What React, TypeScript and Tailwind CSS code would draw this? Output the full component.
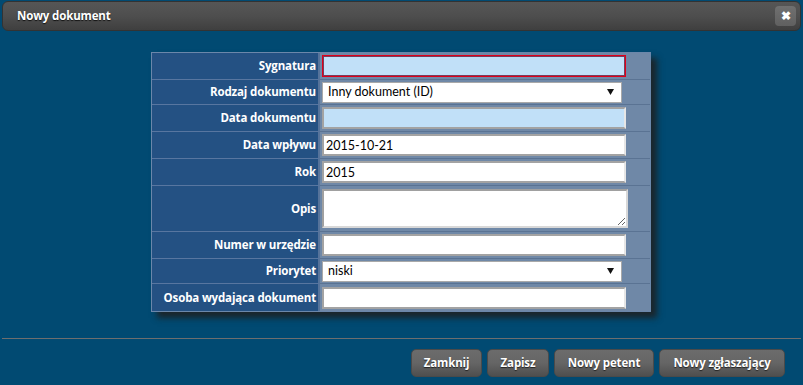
import React from "react";

const font = { fontFamily: 'Lato, "Open Sans", sans-serif' };
const boldFont = { fontFamily: '"Open Sans", "Noto Sans", sans-serif' };

type Row = {
  label: string;
  kind: "text" | "select" | "area";
  value?: string;
  blue?: boolean;
  focus?: boolean;
};

const rows: Row[] = [
  { label: "Sygnatura", kind: "text", blue: true, focus: true },
  { label: "Rodzaj dokumentu", kind: "select", value: "Inny dokument (ID)" },
  { label: "Data dokumentu", kind: "text", blue: true },
  { label: "Data wpływu", kind: "text", value: "2015-10-21" },
  { label: "Rok", kind: "text", value: "2015" },
  { label: "Opis", kind: "area" },
  { label: "Numer w urzędzie", kind: "text" },
  { label: "Priorytet", kind: "select", value: "niski" },
  { label: "Osoba wydająca dokument", kind: "text" },
];

const Field = ({ row }: { row: Row }) => {
  if (row.kind === "select") {
    return (
      <div className="ml-[2px] flex h-[21px] w-[300px] items-center justify-between border border-[#a9a9a9] bg-white pl-[5px] pr-[7px] text-[12.5px] text-black">
        <span>{row.value}</span>
        <svg width="7" height="6" viewBox="0 0 7 6">
          <path d="M0 0h7L3.5 6z" fill="#111" />
        </svg>
      </div>
    );
  }
  if (row.kind === "area") {
    return (
      <textarea
        readOnly
        className="ml-[2px] h-[39px] w-[306px] border-2 border-t-[#a0a0a0] border-l-[#a0a0a0] border-r-[#d8d8d8] border-b-[#d8d8d8] bg-white outline-none"
      />
    );
  }
  return (
    <input
      readOnly
      value={row.value ?? ""}
      style={font}
      className={`ml-[2px] h-[22px] w-[304px] px-[2px] text-[12.5px] text-black outline-none ${
        row.blue ? "bg-[#c1e0f8]" : "bg-white"
      } ${
        row.focus
          ? "border border-[#e0001a] shadow-[inset_0_0_0_1px_#7a3b5a]"
          : "border-2 border-t-[#a3a3a3] border-l-[#a3a3a3] border-r-[#e6e6e6] border-b-[#a3a3a3]"
      }`}
    />
  );
};

const Btn = ({ w, children }: { w: string; children: React.ReactNode }) => (
  <button
    style={boldFont}
    className={`${w} h-[28px] rounded-[5px] border border-[#4a4a4a] bg-gradient-to-b from-[#6c6c6c] via-[#656565] to-[#4f4f4f] text-[11.5px] font-bold tracking-[-0.15px] text-white [text-shadow:0_1px_1px_#222]`}
  >
    {children}
  </button>
);

export default function App() {
  return (
    <div style={font} className="flex h-[385px] w-[803px] flex-col overflow-hidden bg-[#014a72]">
      {/* title bar */}
      <div className="mx-[2px] mt-[1px] flex h-[30px] items-center justify-between rounded-[6px] border border-[#333] bg-gradient-to-b from-[#565656] via-[#4e4e4e] to-[#3f3f3f] pl-[14px] pr-[4px]">
        <span
          style={boldFont}
          className="text-[11.5px] font-bold tracking-[-0.15px] text-white [text-shadow:0_1px_1px_#111]"
        >
          Nowy dokument
        </span>
        <div className="flex h-[20px] w-[21px] items-center justify-center rounded-[4px] bg-gradient-to-b from-[#707070] to-[#606060] text-[12px] font-bold leading-none text-white">
          ✖
        </div>
      </div>

      {/* form */}
      <div className="flex flex-1 items-start justify-center pt-[21px] pr-[1px]">
        <div className="w-[500px] border border-[#6b87aa] shadow-[6px_6px_6px_rgba(30,30,30,0.85)]">
          {rows.map((row, i) => {
            const h =
              row.kind === "area" ? "h-[46px]" : row.kind === "select" ? "h-[25px]" : "h-[27px]";
            const last = i === rows.length - 1;
            return (
              <div key={row.label} className={`flex ${h}`}>
                <div
                  className={`flex w-[168px] items-center justify-end border-r-2 border-r-[#56739a] bg-[#245183] pr-[2px] ${
                    last ? "" : "border-b border-b-[#5876a0]"
                  }`}
                >
                  <span
                    style={boldFont}
                    className="whitespace-nowrap text-[11.5px] font-bold tracking-[-0.15px] text-white"
                  >
                    {row.label}
                  </span>
                </div>
                <div
                  className={`flex flex-1 items-center bg-[#6f88a7] ${
                    last ? "" : "border-b border-b-[#5a7393]"
                  }`}
                >
                  <Field row={row} />
                </div>
              </div>
            );
          })}
        </div>
      </div>

      {/* footer */}
      <div className="mx-[2px] border-t border-[#6e6e6e] pt-[10px] pb-[8px]">
        <div className="flex justify-end gap-[5px] pr-[16px]">
          <Btn w="w-[71px]">Zamknij</Btn>
          <Btn w="w-[62px]">Zapisz</Btn>
          <Btn w="w-[100px]">Nowy petent</Btn>
          <Btn w="w-[126px]">Nowy zgłaszający</Btn>
        </div>
      </div>
    </div>
  );
}
